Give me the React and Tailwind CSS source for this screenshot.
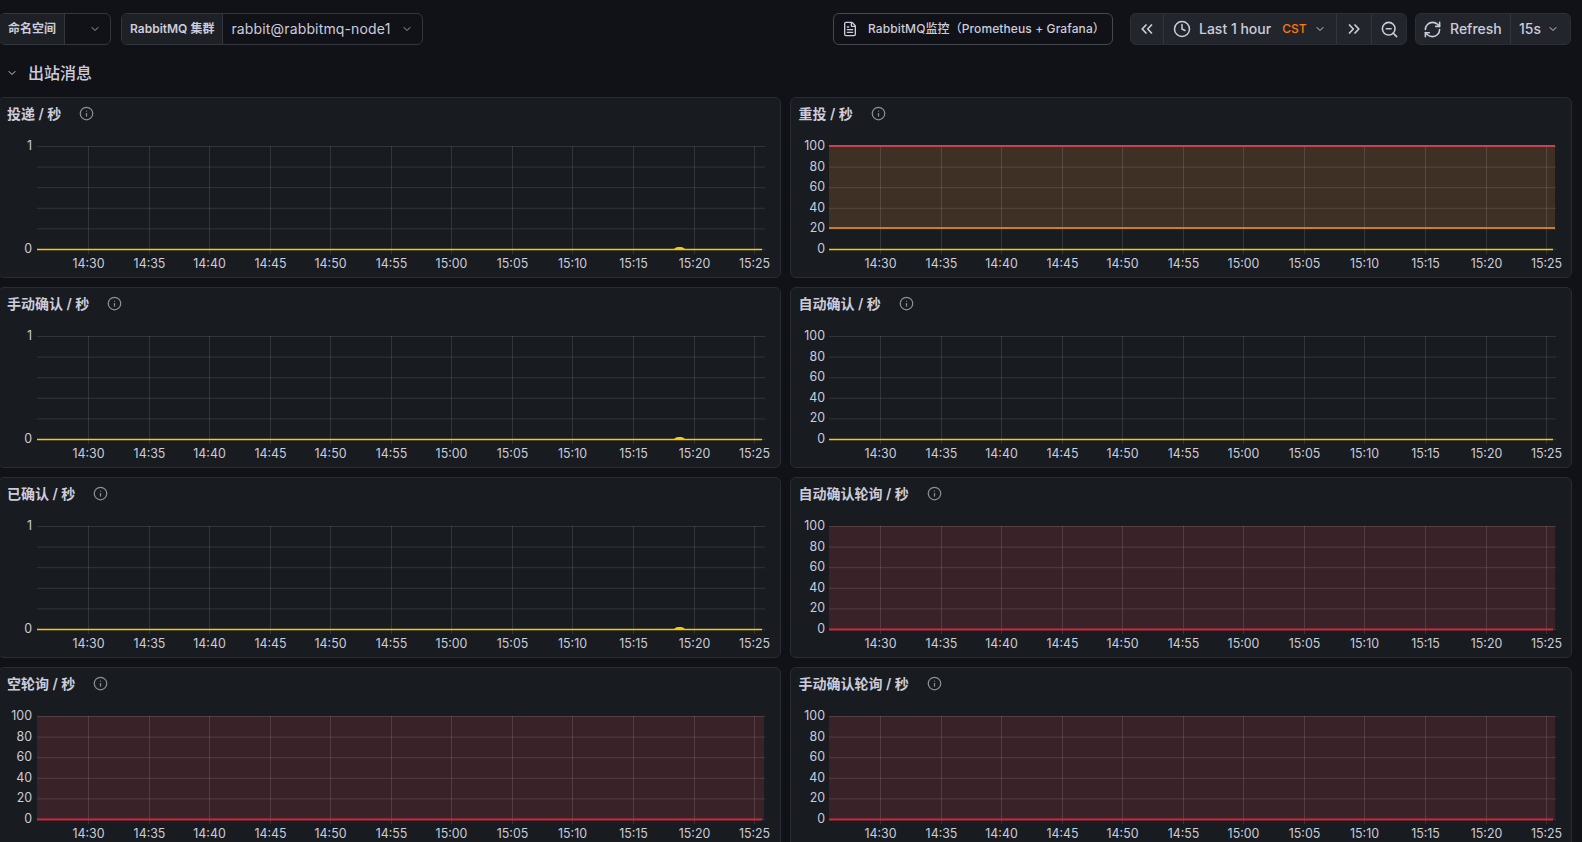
import { ChevronDown, Clock, FileText, Info, RefreshCw, ZoomOut } from "lucide-react";

const times = ["14:30", "14:35", "14:40", "14:45", "14:50", "14:55", "15:00", "15:05", "15:10", "15:15", "15:20", "15:25"];
const cjk = { fontFamily: "Inter, 'Noto Sans CJK SC', sans-serif" };

const panels = [
  { title: "投递 / 秒", ticks: ["1", "", "", "", "", "0"], bump: true, line: "#f2cc0c" },
  { title: "重投 / 秒", ticks: ["100", "80", "60", "40", "20", "0"], band: true, line: "#f2cc0c" },
  { title: "手动确认 / 秒", ticks: ["1", "", "", "", "", "0"], bump: true, line: "#f2cc0c" },
  { title: "自动确认 / 秒", ticks: ["100", "80", "60", "40", "20", "0"], line: "#f2cc0c" },
  { title: "已确认 / 秒", ticks: ["1", "", "", "", "", "0"], bump: true, line: "#f2cc0c" },
  { title: "自动确认轮询 / 秒", ticks: ["100", "80", "60", "40", "20", "0"], red: true, line: "#d0293e" },
  { title: "空轮询 / 秒", ticks: ["100", "80", "60", "40", "20", "0"], red: true, line: "#d0293e" },
  { title: "手动确认轮询 / 秒", ticks: ["100", "80", "60", "40", "20", "0"], red: true, line: "#d0293e" },
];

const Chart = ({ panel, right }) => {
  const left = 38;
  const end = right ? 765 : 766;
  const rows = [0, 20.6, 41.2, 61.8, 82.4, 103];
  const grid = panel.band || panel.red ? "#ffffff1f" : "#ccccdc26";

  return (
    <svg width="780" height="146" className="block">
      {panel.band && <rect x={left} y="16" width={end - left - 1} height="82" fill="#3e3025" />}
      {panel.red && <rect x={left} y="16" width={end - left - 1} height="103" fill="#3a2328" />}
      {rows.map((offset) => (
        <line key={offset} x1={left} x2={end} y1={16.5 + offset} y2={16.5 + offset} stroke={grid} />
      ))}
      {times.map((time, i) => {
        const x = Math.round(89 + i * 60.55) + 0.5;
        return (
          <g key={time}>
            <line x1={x} x2={x} y1="16" y2="124" stroke={grid} />
            <text x={x} y="138" textAnchor="middle" fontSize="12.4" fill="#ccccdc" fontFamily="Inter, sans-serif">
              {time}
            </text>
          </g>
        );
      })}
      {panel.ticks.map((tick, i) =>
        tick ? (
          <text key={i} x={right ? left - 4 : left - 5} y={20 + rows[i]} textAnchor="end" fontSize="12.4" fill="#ccccdc" fontFamily="Inter, sans-serif">
            {tick}
          </text>
        ) : null,
      )}
      {panel.band && <line x1={left} x2={end - 1} y1="16" y2="16" stroke="#c74350" strokeWidth="2" />}
      {panel.band && <line x1={left} x2={end - 1} y1="98" y2="98" stroke="#c97c2e" strokeWidth="2" />}
      {panel.bump && <path d="M675 119 q2 -2 4 -2 h3 q2 0 4 2 z" fill="#f2cc0c" />}
      <line x1={left} x2={end - 3} y1="119.5" y2="119.5" stroke={panel.line} strokeWidth={panel.red ? 2 : 1.5} />
    </svg>
  );
};

const Panel = ({ panel, right }) => (
  <div className="h-[181px] overflow-hidden rounded-[6px] border border-[#2a2c31] bg-[#181b1f]">
    <div className="flex h-[32px] items-center pb-[1px] pl-2">
      <span className="text-sm font-semibold text-[#ccccdc]" style={cjk}>
        {panel.title}
      </span>
      <Info size={15} className="ml-[18px] text-[#8e8e95]" />
    </div>
    <Chart panel={panel} right={right} />
  </div>
);

const VariablePicker = ({ label, value, valueClass }) => (
  <div className="flex h-8 items-center rounded-[6px] border border-[#33363c]" style={cjk}>
    <div className="flex h-full items-center rounded-l-[6px] border-r border-[#33363c] bg-[#1d2025] px-2 text-xs font-semibold text-[#ccccdc]">
      {label}
    </div>
    <div className={`flex h-full items-center justify-between pl-2 pr-[9px] text-sm tracking-[0.15px] text-[#ccccdc] ${valueClass}`}>
      <span>{value}</span>
      <ChevronDown size={12} className="text-[#a0a1a8]" />
    </div>
  </div>
);

const ToolButton = ({ children, className }) => (
  <div className={`flex h-full items-center border-[#33363c] text-[#ccccdc] ${className}`}>{children}</div>
);

const DoubleChevron = ({ flip }) => (
  <svg width="12" height="10" viewBox="0 0 12 10" fill="none" stroke="currentColor" strokeWidth="1.7" strokeLinecap="round" strokeLinejoin="round" className={flip ? "rotate-180" : ""}>
    <path d="M5 1 1.2 5 5 9" />
    <path d="M10.5 1 6.7 5l3.8 4" />
  </svg>
);

const App = () => {
  return (
    <div className="h-[842px] w-[1582px] overflow-hidden bg-[#111217]" style={cjk}>
      <div className="flex h-[59px] items-start pr-[11px] pt-[13px]">
        <div className="-ml-[1px] flex gap-[10px]">
          <VariablePicker label="命名空间" value="" valueClass="w-[45px]" />
          <VariablePicker label="RabbitMQ 集群" value="rabbit@rabbitmq-node1" valueClass="gap-[10px]" />
        </div>

        <div className="ml-auto flex h-8 items-center gap-[17px]">
          <div className="flex h-full w-[280px] items-center gap-[10px] rounded-[6px] border border-[#44474d] pl-[8px] text-xs font-medium tracking-[0.1px] text-[#ccccdc]">
            <FileText size={16} />
            <span>RabbitMQ监控（Prometheus + Grafana）</span>
          </div>

          <div className="flex h-full items-center gap-2">
            <div className="flex h-full items-center rounded-[6px] border border-[#2c2f35] bg-[#22252b] text-sm font-medium">
              <ToolButton className="w-[33px] justify-center border-r"><DoubleChevron /></ToolButton>
              <ToolButton className="w-[173px] border-r pl-[9px]">
                <Clock size={18} />
                <span className="ml-2">Last 1 hour</span>
                <span className="ml-[11px] text-xs text-[#ff780a]">CST</span>
                <ChevronDown size={12} className="ml-[7px]" />
              </ToolButton>
              <ToolButton className="w-[35px] justify-center border-r"><DoubleChevron flip /></ToolButton>
              <ToolButton className="w-[34px] justify-center"><ZoomOut size={19} /></ToolButton>
            </div>

            <div className="flex h-full items-center rounded-[6px] border border-[#2c2f35] bg-[#22252b] text-sm font-medium">
              <ToolButton className="w-[95px] gap-2 border-r pl-[7px]">
                <RefreshCw size={19} />
                <span>Refresh</span>
              </ToolButton>
              <ToolButton className="w-[59px] gap-[6px] pl-2">
                <span>15s</span>
                <ChevronDown size={12} />
              </ToolButton>
            </div>
          </div>
        </div>
      </div>

      <div className="flex h-[38px] items-start pl-[6px] pt-[4px] text-[#ccccdc]">
        <ChevronDown size={12} className="mt-[4px]" />
        <span className="ml-[10px] text-base font-medium leading-[20px]">出站消息</span>
      </div>

      <div className="-ml-[2px] grid w-[1574px] grid-cols-2 gap-x-[9px] gap-y-[9px]">
        {panels.map((panel, i) => (
          <Panel key={panel.title} panel={panel} right={i % 2 === 1} />
        ))}
      </div>
    </div>
  );
};

export default App;
